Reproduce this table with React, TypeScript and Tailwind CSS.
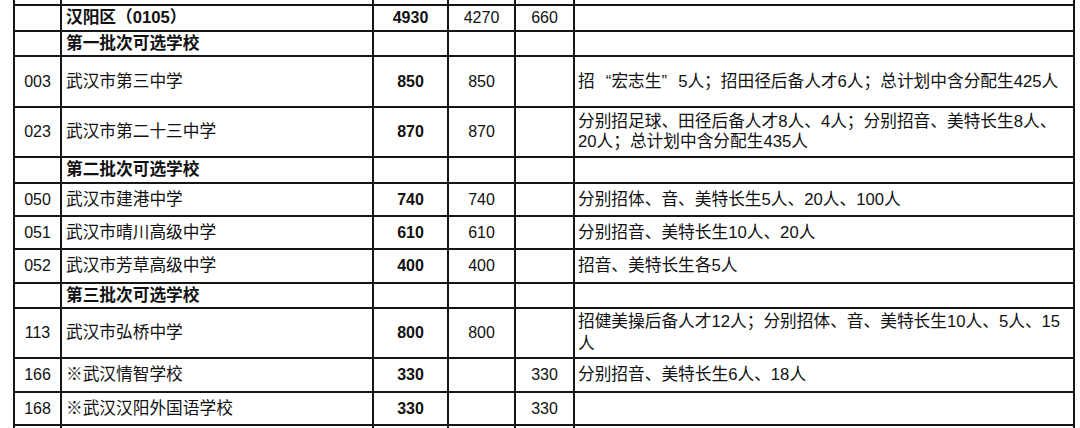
import React from "react";

type Row = {
  code?: string;
  name?: string;
  heading?: boolean;
  plan?: string;
  a?: string;
  b?: string;
  desc?: React.ReactNode;
  h: number;
  lead?: string;
};

// full-width curly quotes, as in the source sheet
const Open = () => <span className="inline-block w-[1em] text-right">“</span>;
const Close = () => <span className="inline-block w-[1em] text-left">”</span>;

const rows: Row[] = [
  { h: 26 },
  { name: "汉阳区（0105）", heading: true, plan: "4930", a: "4270", b: "660", h: 26 },
  { name: "第一批次可选学校", heading: true, h: 25 },
  {
    code: "003",
    name: "武汉市第三中学",
    plan: "850",
    a: "850",
    desc: (
      <>
        招<Open />宏志生<Close />5人；招田径后备人才6人；总计划中含分配生425人
      </>
    ),
    h: 51,
  },
  {
    code: "023",
    name: "武汉市第二十三中学",
    plan: "870",
    a: "870",
    desc: (
      <>
        分别招足球、田径后备人才8人、4人；分别招音、美特长生8人、
        <br />
        20人；总计划中含分配生435人
      </>
    ),
    lead: "leading-[18px]",
    h: 50,
  },
  { name: "第二批次可选学校", heading: true, h: 26 },
  { code: "050", name: "武汉市建港中学", plan: "740", a: "740", desc: "分别招体、音、美特长生5人、20人、100人", h: 33 },
  { code: "051", name: "武汉市晴川高级中学", plan: "610", a: "610", desc: "分别招音、美特长生10人、20人", h: 33 },
  { code: "052", name: "武汉市芳草高级中学", plan: "400", a: "400", desc: "招音、美特长生各5人", h: 34 },
  { name: "第三批次可选学校", heading: true, h: 25 },
  {
    code: "113",
    name: "武汉市弘桥中学",
    plan: "800",
    a: "800",
    desc: (
      <>
        招健美操后备人才12人；分别招体、音、美特长生10人、5人、15
        <br />人
      </>
    ),
    lead: "leading-[22px]",
    h: 50,
  },
  { code: "166", name: "※武汉情智学校", plan: "330", b: "330", desc: "分别招音、美特长生6人、18人", h: 34 },
  { code: "168", name: "※武汉汉阳外国语学校", plan: "330", b: "330", h: 33 },
  { h: 26 },
];

const cell = "border-2 border-[#161616] align-middle p-0 leading-[20px]";

export default function App() {
  return (
    <div className="h-[428px] w-[1080px] overflow-hidden bg-white text-[#111] font-['Liberation_Sans','Noto_Sans_CJK_SC',sans-serif]">
      <table className="ml-[13px] mt-[-22px] w-[1062px] table-fixed border-collapse">
        <colgroup>
          <col className="w-[47px]" />
          <col className="w-[312px]" />
          <col className="w-[75px]" />
          <col className="w-[67px]" />
          <col className="w-[59px]" />
          <col className="w-[500px]" />
        </colgroup>
        <tbody>
          {rows.map((r, i) => (
            <tr key={i} style={{ height: r.h }}>
              <td className={`${cell} text-center text-[16px]`}>{r.code}</td>
              <td
                className={`${cell} pl-[4px] text-[16.7px] whitespace-nowrap ${r.heading ? "font-bold" : ""}`}
              >
                {r.name}
              </td>
              <td className={`${cell} text-center text-[16px] font-bold`}>{r.plan}</td>
              <td className={`${cell} text-center text-[16px]`}>{r.a}</td>
              <td className={`${cell} text-center text-[16px]`}>{r.b}</td>
              <td className={`${cell} pl-[3px] text-[16.7px] whitespace-nowrap ${r.lead ?? ""}`}>{r.desc}</td>
            </tr>
          ))}
        </tbody>
      </table>
    </div>
  );
}
